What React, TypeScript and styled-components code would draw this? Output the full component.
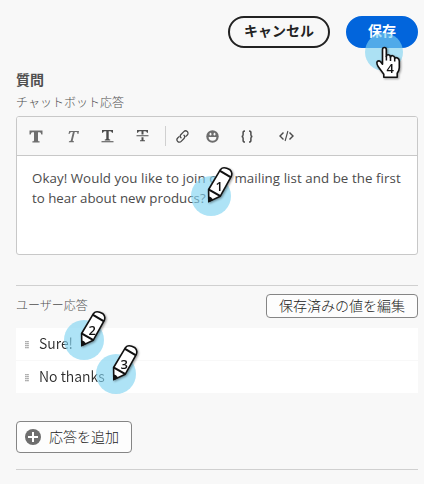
import React from "react";
import styled, { createGlobalStyle } from "styled-components";

const jp = `"Noto Sans CJK JP", sans-serif`;

const Global = createGlobalStyle`
  * { box-sizing: border-box; }
  body { margin: 0; background: #f8f8f8; font-family: ${jp}; color: #2c2c2c; }
  button { font-family: inherit; padding: 0; margin: 0; white-space: nowrap; }
`;

const Page = styled.main`
  position: relative;
  display: flex;
  flex-direction: column;
  width: 424px;
  height: 484px;
  padding: 16px 6px 0 16px;
  overflow: hidden;
`;

const Actions = styled.div`
  display: flex;
  justify-content: flex-end;
  gap: 16px;
  height: 32px;
`;

const Pill = styled.button<{ $primary?: boolean }>`
  width: ${(p) => (p.$primary ? 72 : 102)}px;
  height: 32px;
  border-radius: 16px;
  border: 2px solid ${(p) => (p.$primary ? "#0265dc" : "#222")};
  background: ${(p) => (p.$primary ? "#0265dc" : "#f8f8f8")};
  color: ${(p) => (p.$primary ? "#fff" : "#222")};
  font-size: 14px;
  font-weight: 700;
  line-height: 24px;
  padding-bottom: 4px;
`;

const Heading = styled.h1`
  margin: 19px 0 0;
  height: 25px;
  font-size: 14px;
  line-height: 24px;
  font-weight: 700;
  color: #505050;
`;

const Label = styled.div`
  font-size: 12px;
  font-weight: 300;
  line-height: 20px;
  height: 24px;
  color: #505050;
`;

const Editor = styled.section`
  height: 139px;
  border: 1px solid #c8c8c8;
  border-radius: 3px;
  background: #fff;
  overflow: hidden;
`;

const Toolbar = styled.div`
  display: grid;
  grid-template-columns: 38px 35px 35px 35px 8px 29px 30px 40px 38px;
  height: 39px;
  border-bottom: 1px solid #c8c8c8;
  background: #f8f8f8;
`;

const Tool = styled.div`
  display: flex;
  align-items: center;
  justify-content: center;
  height: 100%;
  svg { display: block; }
`;

const ToolDivider = styled.i`
  align-self: center;
  justify-self: start;
  width: 1px;
  height: 20px;
  margin-left: 5px;
  background: #d0d0d0;
`;

const Message = styled.p`
  margin: 12px 0 0 15px;
  font-family: "Open Sans", sans-serif;
  font-size: 13.3px;
  line-height: 20px;
  color: #4b4b4b;
  white-space: nowrap;
`;

const Line = styled.span<{ $spacing: number }>`
  display: block;
  letter-spacing: ${(p) => p.$spacing}px;
`;

const Rule = styled.hr<{ $top: number }>`
  width: 402px;
  height: 1px;
  margin: ${(p) => p.$top}px 0 0;
  border: 0;
  background: #d0d0d0;
`;

const ResponseHeader = styled.div`
  display: flex;
  justify-content: space-between;
  align-items: flex-start;
  height: 42px;
  padding-top: 8px;
`;

const HeaderLabel = styled(Label)`
  padding-top: 1px;
`;

const OutlineButton = styled.button<{ $large?: boolean }>`
  display: flex;
  align-items: center;
  justify-content: center;
  gap: 8px;
  width: ${(p) => (p.$large ? 116 : 152)}px;
  height: ${(p) => (p.$large ? 32 : 24)}px;
  margin-top: ${(p) => (p.$large ? 28 : 0)}px;
  padding: 0 ${(p) => (p.$large ? 4 : 0)}px 2px 0;
  border: 1px solid #858585;
  border-radius: 4px;
  background: #fdfdfd;
  color: #222;
  font-size: 14px;
  font-weight: 300;
  line-height: 20px;
  svg { margin-top: 2px; }
`;

const Responses = styled.div`
  display: flex;
  flex-direction: column;
  gap: 1px;
`;

const Response = styled.div`
  display: flex;
  align-items: center;
  gap: 10px;
  height: 32px;
  padding: 0 0 3px 9px;
  background: #fff;
  font-size: 15px;
  font-weight: 350;
  svg { margin-top: 5px; }
`;

const Answer = styled.span`
  transform: scaleX(0.935);
  transform-origin: left;
`;

const Overlay = styled.svg<{ $x: number; $y: number }>`
  position: absolute;
  left: ${(p) => p.$x}px;
  top: ${(p) => p.$y}px;
  overflow: visible;
  pointer-events: none;
  filter: drop-shadow(1px 1px 1px #0006);
`;

const Spot = styled.div<{ $x: number; $y: number; $size?: number }>`
  position: absolute;
  left: ${(p) => p.$x}px;
  top: ${(p) => p.$y}px;
  width: ${(p) => p.$size ?? 40}px;
  height: ${(p) => p.$size ?? 40}px;
  border-radius: 50%;
  background: rgba(126, 211, 241, 0.63);
`;

const Digit = styled.text`
  font-family: "Open Sans", sans-serif;
  font-size: 13px;
  font-weight: 600;
  text-anchor: middle;
  fill: #111;
`;

const slimT = "M1 1H12V3.8H11Q10.7 2.3 9.4 2.3H7.7V9.8Q7.7 10.4 9.2 10.5V11.4H3.8V10.5Q5.3 10.4 5.3 9.8V2.3H3.6Q2.3 2.3 2 3.8H1Z";

function BoldIcon() {
  return (
    <svg width="14" height="13" fill="#6e6e6e">
      <path d="M.5 .6H13.5V4.4H12.3Q12 2.2 10.6 2.2H9V10.4Q9 11.2 10.6 11.3V12.4H3.4V11.3Q5 11.2 5 10.4V2.2H3.4Q2 2.2 1.7 4.4H.5Z" />
    </svg>
  );
}
function ItalicIcon() {
  return (
    <svg width="14" height="13" fill="#6e6e6e">
      <path d="M3.2 1H13L12.4 4H11.5Q11.6 2 10.5 2H8.8L6.7 10.5Q6.5 11.2 8 11.3L7.8 12.2H2.8L3 11.3Q4.6 11.2 4.8 10.5L6.9 2H5.6Q4.1 2 3.4 4H2.5Z" />
    </svg>
  );
}
function UnderlineIcon() {
  return <svg width="13" height="14" fill="#4b4b4b"><path d={slimT} /><path d="M.5 12.3H12.5V13.3H.5Z" /></svg>;
}
function StrikeIcon() {
  return (
    <svg width="13" height="14" fill="#505050">
      <path d="M1 1H12V3.8H11Q10.7 2.3 9.4 2.3H7.5V5.5H5.5V2.3H3.6Q2.3 2.3 2 3.8H1ZM5.5 8.2H7.5V11.2H9V12.2H4V11.2H5.5Z" />
      <path d="M.5 6.3H12.5V7.3H.5Z" />
    </svg>
  );
}
function LinkIcon() {
  return (
    <svg width="13" height="13" viewBox="0 0 13 13" fill="none" stroke="#4b4b4b" strokeWidth="1.3" strokeLinecap="round">
      <path d="M5 7.8 A2.4 2.4 0 0 1 5 4.5L7.8 1.6A2.4 2.4 0 0 1 11.3 5L9.9 6.4" />
      <path d="M8 5.2A2.4 2.4 0 0 1 8 8.5L5.2 11.4A2.4 2.4 0 0 1 1.7 8L3.1 6.6" />
    </svg>
  );
}
function SmileIcon() {
  return (
    <svg width="13" height="13" viewBox="0 0 13 13">
      <circle cx="6.5" cy="6.5" r="6.2" fill="#6e6e6e" />
      <ellipse cx="4.5" cy="4.2" rx=".9" ry="1.4" fill="#f8f8f8" />
      <ellipse cx="8.5" cy="4.2" rx=".9" ry="1.4" fill="#f8f8f8" />
      <path d="M2.6 7H10.4A3.9 3.7 0 0 1 2.6 7Z" fill="#f8f8f8" />
    </svg>
  );
}
function BracesIcon() {
  return (
    <svg width="12" height="13" viewBox="0 0 12 13" fill="none" stroke="#4b4b4b" strokeWidth="1.5">
      <path d="M4 .9Q2.1.9 2.1 2.5V4.7Q2.1 6.2.7 6.5Q2.1 6.8 2.1 8.3V10.5Q2.1 12.1 4 12.1" />
      <path d="M8 .9Q9.9.9 9.9 2.5V4.7Q9.9 6.2 11.3 6.5Q9.9 6.8 9.9 8.3V10.5Q9.9 12.1 8 12.1" />
    </svg>
  );
}
function CodeIcon() {
  return (
    <svg width="15" height="12" viewBox="0 0 15 12" fill="none" stroke="#4b4b4b" strokeWidth="1.4">
      <path d="M4.5 2.4 1 6 4.5 9.6M10.5 2.4 14 6 10.5 9.6" />
      <path d="M8.9 1 6.1 11" strokeWidth="1.1" />
    </svg>
  );
}
function Grip() {
  return (
    <svg width="4" height="8" fill="#8a8a8a">
      {[0, 2, 4, 6].map((y) => (
        <React.Fragment key={y}>
          <rect x="0.3" y={y} width="1.3" height="1.3" />
          <rect x="2.3" y={y} width="1.3" height="1.3" />
        </React.Fragment>
      ))}
    </svg>
  );
}

function PencilMarker({ x, y, n }: { x: number; y: number; n: number }) {
  return (
    <>
      <Spot $x={x} $y={y + 16} />
      <Overlay $x={x} $y={y} width="44" height="48">
        <path
          d="M17.8 41.6 17.6 29.5 29.6 9.4Q32.4 5.8 39 9.8Q41.8 12.2 40.3 16.3L29.3 36.2Z"
          fill="#fff" stroke="#111" strokeWidth="1.6" strokeLinejoin="round"
        />
        <path d="M28.6 10.6 40 17.4M17.5 29.4 29.4 36.2" stroke="#111" strokeWidth="2.1" />
        <path d="M17 42.6V36.6Q20 36.2 22.2 40Z" fill="#111" />
        <Digit x="28.2" y="30.7">{n}</Digit>
      </Overlay>
    </>
  );
}

function HandMarker() {
  return (
    <>
      <Spot $x={365} $y={33} $size={38} />
      <Overlay $x={375} $y={46} width="26" height="33">
        <path
          d="M7.5 18.2V3.5Q7.5 1.5 9.4 1.5T11.3 3.5V10.4Q11.6 8.6 13.4 8.8T15.4 10.8V11.2Q15.9 9.4 17.7 9.7T19.7 11.8V12.4Q20.6 11 22.5 12Q24.3 13 24.3 15.2V21.5Q24.3 24.5 22.2 27.2V31.2H8.8V28.2L3.3 20.8Q1.2 17.3 2.2 15.6Q3.9 13.8 6 16.2Z"
          fill="#fff" stroke="#111" strokeWidth="1.6" strokeLinejoin="round"
        />
        <path d="M11.4 10V14.5M15.5 11V15M19.7 12V15.5" stroke="#111" strokeWidth="1.5" />
        <Digit x="15.2" y="27">4</Digit>
      </Overlay>
    </>
  );
}

const tools = [BoldIcon, ItalicIcon, UnderlineIcon, StrikeIcon, null, LinkIcon, SmileIcon, BracesIcon, CodeIcon];

export default function App() {
  return (
    <>
      <Global />
      <Page>
        <Actions>
          <Pill>キャンセル</Pill>
          <Pill $primary>保存</Pill>
        </Actions>
        <Heading>質問</Heading>
        <Label>チャットボット応答</Label>
        <Editor>
          <Toolbar>
            {tools.map((Icon, i) => (Icon ? <Tool key={i}><Icon /></Tool> : <ToolDivider key={i} />))}
          </Toolbar>
          <Message>
            <Line $spacing={0.07}>Okay! Would you like to join our mailing list and be the first</Line>
            <Line $spacing={0}>to hear about new producs?</Line>
          </Message>
        </Editor>
        <Rule $top={30} />
        <ResponseHeader>
          <HeaderLabel>ユーザー応答</HeaderLabel>
          <OutlineButton>保存済みの値を編集</OutlineButton>
        </ResponseHeader>
        <Responses>
          <Response><Grip /><Answer>Sure!</Answer></Response>
          <Response><Grip /><Answer>No thanks</Answer></Response>
        </Responses>
        <OutlineButton $large>
          <svg width="16" height="16" viewBox="0 0 16 16">
            <circle cx="8" cy="8" r="8" fill="#6e6e6e" />
            <path d="M8 3V13M3 8H13" stroke="#fff" strokeWidth="2" />
          </svg>
          <span>応答を追加</span>
        </OutlineButton>
        <Rule $top={16} />
        <PencilMarker x={191} y={160} n={1} />
        <PencilMarker x={64} y={304} n={2} />
        <PencilMarker x={96} y={338} n={3} />
        <HandMarker />
      </Page>
    </>
  );
}
